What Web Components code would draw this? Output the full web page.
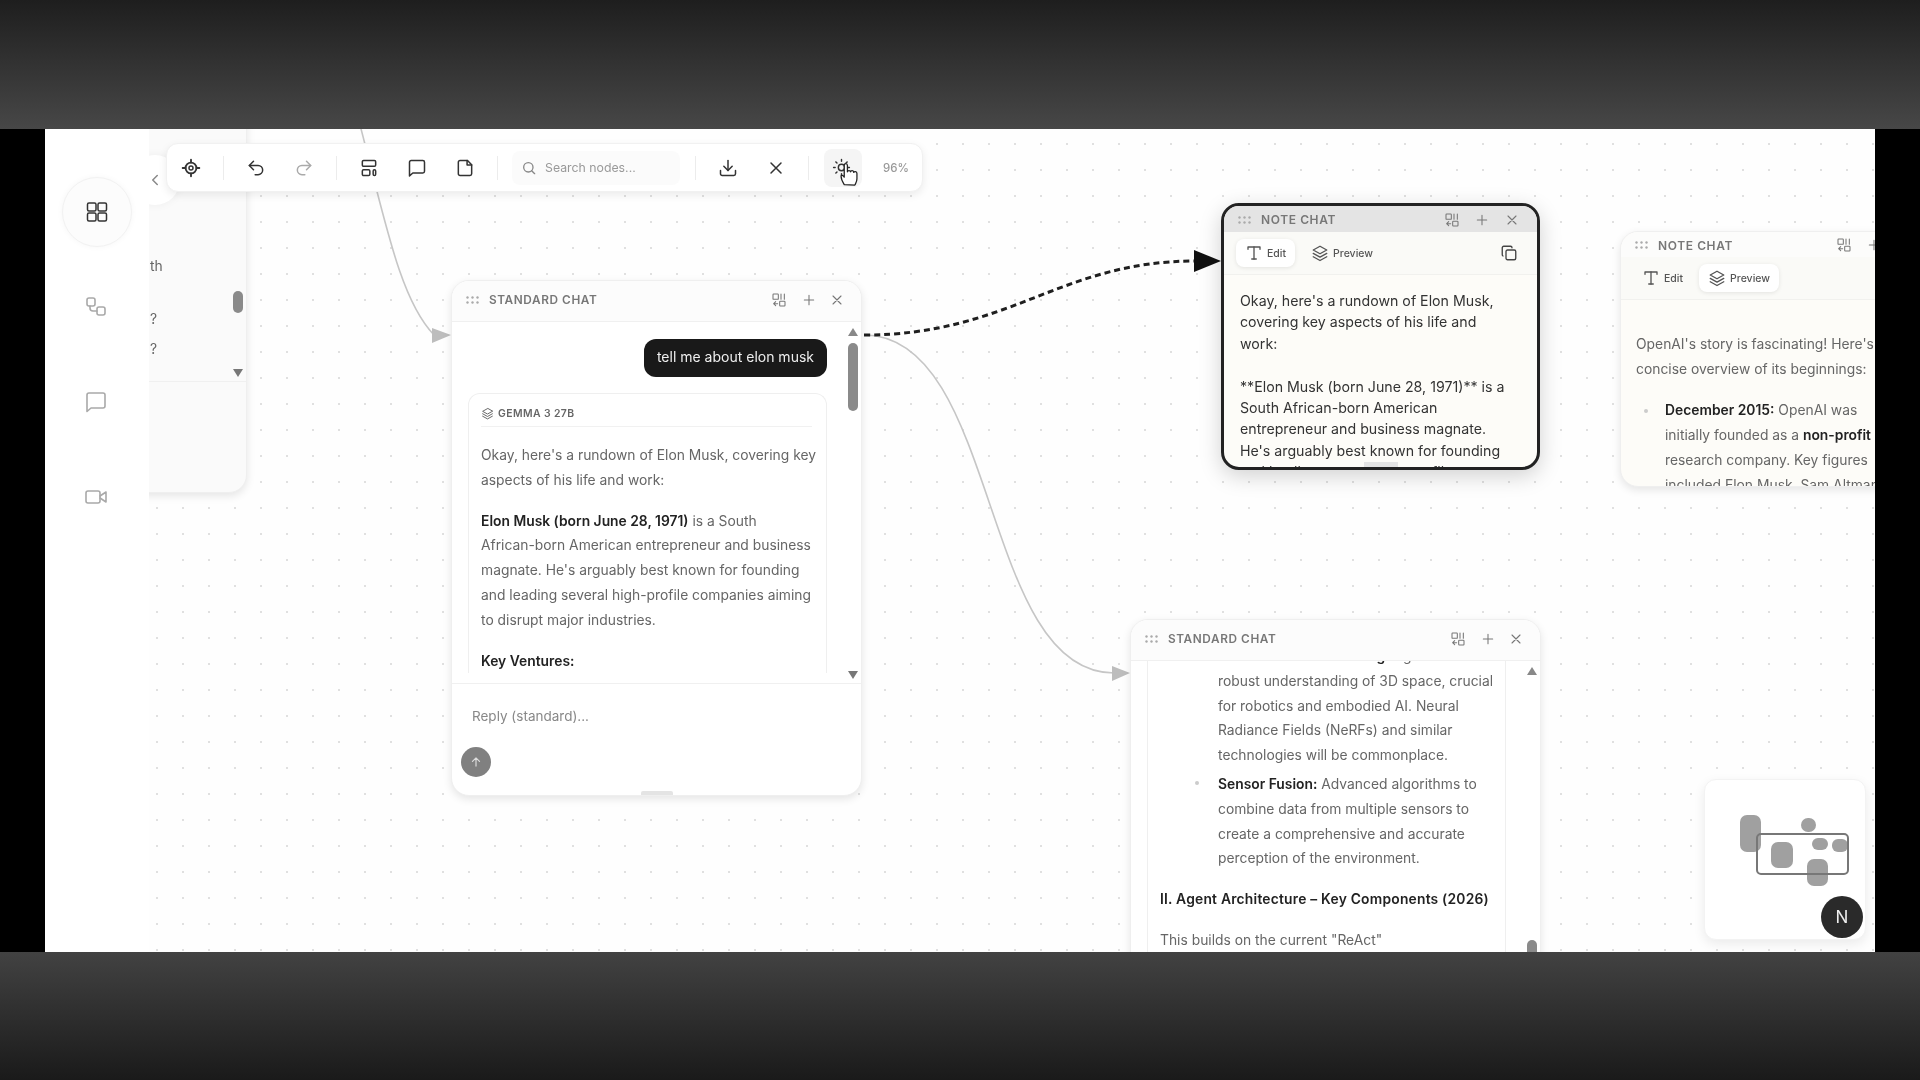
<!DOCTYPE html>
<html lang="en">
<head>
<meta charset="utf-8">
<title>Flow canvas</title>
<style>
    html, body { margin: 0; height: 100%; background: #000; }
    body { font-family: 'Inter', 'Liberation Sans', sans-serif; overflow: hidden; }
    b { font-weight: 600; color: #222; }
    .frag { font: 13.85px/25px Inter, sans-serif; color: #666; margin-left: 284px; }
</style>
</head>
<body>
<video-frame>
    <side-rail></side-rail>
    <flow-board>
        <chat-node x="-300" y="-60" w="398" h="424" foot="111" tone="#fafafa">
            <div class="frag" style="margin-top:143px;">th</div>
            <div class="frag" style="margin-top:28px;">?</div>
            <div class="frag" style="margin-top:5px;">?</div>
            <scroll-strip slot="strip" gap="166" thumb="22"></scroll-strip>
        </chat-node>

        <chat-node x="302" y="151" w="411" h="516" foot="112" title="Standard chat">
            <user-bubble>tell me about elon musk</user-bubble>
            <reply-card model="Gemma 3 27B">
                <p>Okay, here's a rundown of Elon Musk, covering key<br>aspects of his life and work:</p>
                <p><b>Elon Musk (born June 28, 1971)</b> is a South<br>African-born American entrepreneur and business<br>magnate. He's arguably best known for founding<br>and leading several high-profile companies aiming<br>to disrupt major industries.</p>
                <p><b>Key Ventures:</b></p>
            </reply-card>
            <scroll-strip slot="strip" gap="7" thumb="68"></scroll-strip>
            <reply-box slot="foot" hint="Reply (standard)..."></reply-box>
        </chat-node>

        <note-node x="1072" y="74" w="319" h="267" head="26" selected tab="edit" title="Note chat">
            <div style="font:14.2px/21.4px Inter,sans-serif;color:#333;white-space:nowrap;padding:15px 0 0 16px;">Okay, here's a rundown of Elon Musk,<br>covering key aspects of his life and<br>work:<br><br>**Elon Musk (born June 28, 1971)** is a<br>South African-born American<br>entrepreneur and business magnate.<br>He's arguably best known for founding<br>and leading several high-profile</div>
        </note-node>

        <note-node x="1471" y="102" w="310" h="256" head="25" tab="preview" title="Note chat">
            <div style="font:13.85px/25px Inter,sans-serif;color:#666;white-space:nowrap;padding:32px 0 0 15px;">
                OpenAI's story is fascinating! Here's a<br>concise overview of its beginnings:
                <div style="position:relative;margin:16px 0 0 29px;">
                    <i style="position:absolute;left:-21px;top:11px;width:4px;height:4px;border-radius:50%;background:#ccc;"></i>
                    <b>December 2015:</b> OpenAI was<br>initially founded as a <b>non-profit</b><br>research company. Key figures<br>included Elon Musk, Sam Altman,
                </div>
            </div>
        </note-node>

        <chat-node x="981" y="490" w="411" h="516" foot="0" title="Standard chat">
            <reply-card bare>
                <div style="margin:-17px 0 0 58px;position:relative;">
                    <i style="position:absolute;left:-23px;top:137px;width:4px;height:4px;border-radius:50%;background:#ccc;"></i>
                    <b>3D Scene Understanding:</b> Agents will have a<br>robust understanding of 3D space, crucial<br>for robotics and embodied AI. Neural<br>Radiance Fields (NeRFs) and similar<br>technologies will be commonplace.
                    <div style="margin-top:4px;"><b>Sensor Fusion:</b> Advanced algorithms to<br>combine data from multiple sensors to<br>create a comprehensive and accurate<br>perception of the environment.</div>
                </div>
                <p><b style="letter-spacing:.015em">II. Agent Architecture – Key Components (2026)</b></p>
                <p>This builds on the current "ReAct"</p>
            </reply-card>
            <scroll-strip slot="strip" gap="265" thumb="40"></scroll-strip>
        </chat-node>

        <tool-bar></tool-bar>
        <mini-map></mini-map>
    </flow-board>
</video-frame>

<script>
const ICONS = {
    target: '<circle cx="12" cy="12" r="6.5" stroke-width="2.2"/><circle cx="12" cy="12" r="2.4"/><path d="M12 2v3.5M12 18.5V22M2 12h3.5M18.5 12H22" stroke-width="2.2"/>',
    undo: '<path d="M9 14 4 9l5-5"/><path d="M4 9h10.5a5.5 5.5 0 0 1 0 11H11"/>',
    redo: '<path d="m15 14 5-5-5-5"/><path d="M20 9H9.5a5.5 5.5 0 0 0 0 11H13"/>',
    layout: '<rect x="4" y="3" width="16" height="7" rx="1.5"/><rect x="4" y="14" width="9" height="7" rx="1.5"/><rect x="17" y="14" width="3" height="7" rx="1.5"/>',
    comment: '<path d="M21 16a2 2 0 0 1-2 2H7l-4 3.5V5a2 2 0 0 1 2-2h14a2 2 0 0 1 2 2z"/>',
    note: '<path d="M4 5a2 2 0 0 1 2-2h9l5 5v11a2 2 0 0 1-2 2H6a2 2 0 0 1-2-2z"/><path d="M14.5 3v5.5H20"/>',
    search: '<circle cx="11" cy="11" r="7"/><path d="m20.5 20.5-4.5-4.5"/>',
    download: '<path d="M21 15v4a2 2 0 0 1-2 2H5a2 2 0 0 1-2-2v-4"/><path d="m7 10 5 5 5-5"/><path d="M12 15V3"/>',
    close: '<path d="M18 6 6 18M6 6l12 12"/>',
    plus: '<path d="M12 5v14M5 12h14"/>',
    sun: '<circle cx="12" cy="12" r="4"/><path d="M12 2v2M12 20v2M4.900 4.900l1.400 1.400M17.700 17.700l1.400 1.400M2 12h2M20 12h2M4.900 19.100l1.400-1.400M17.700 6.300l1.400-1.400"/>',
    grid: '<rect x="2.500" y="3" width="8.500" height="8" rx="1.500"/><rect x="13" y="3" width="8.500" height="8" rx="1.500"/><rect x="2.500" y="13" width="8.500" height="8" rx="1.500"/><rect x="13" y="13" width="8.500" height="8" rx="1.500"/>',
    flow: '<rect x="3" y="3" width="8" height="8" rx="2"/><rect x="13" y="12" width="8" height="8" rx="2"/><path d="M6 11v2a3 3 0 0 0 3 3h4"/>',
    video: '<rect x="2" y="6" width="14" height="12" rx="2"/><path d="m16 11 6-4v10l-6-4"/>',
    layers: '<path d="M12 3 3 8l9 5 9-5z"/><path d="m3 12.500 9 5 9-5"/><path d="m3 17 9 5 9-5"/>',
    type: '<path d="M4 7V4h16v3"/><path d="M9 20h6"/><path d="M12 4v16"/>',
    copy: '<rect x="8" y="8" width="13" height="13" rx="2"/><path d="M4 16a2 2 0 0 1-1-2V5a2 2 0 0 1 2-2h9a2 2 0 0 1 2 2"/>',
    swap: '<rect x="3" y="3" width="8" height="8" rx="1"/><path d="M15 3v8M20 3v8"/><rect x="13" y="14" width="8" height="7" rx="1"/><path d="M10 17.500H4M7 14.500l-3 3 3 3"/>',
    send: '<path d="M12 19V5M6 11l6-6 6 6"/>',
    left: '<path d="m15 18-6-6 6-6"/>',
};

class UiIcon extends HTMLElement {
    connectedCallback() {
        const size = this.getAttribute('size') ?? 20;
        const width = this.getAttribute('stroke') ?? 2;
        this.attachShadow({ mode: 'open' }).innerHTML = `
            <style>:host { display: inline-flex; flex: none; } svg { display: block; }</style>
            <svg width="${size}" height="${size}" viewBox="0 0 24 24" fill="none" stroke="currentColor"
                stroke-width="${width}" stroke-linecap="round" stroke-linejoin="round">${ICONS[this.getAttribute('name')] ?? ''}</svg>`;
    }
}

class VideoFrame extends HTMLElement {
    constructor() {
        super();
        this.attachShadow({ mode: 'open' }).innerHTML = `
            <style>
                :host { display: grid; grid-template-rows: 129px 823px 128px; width: 1920px; height: 1080px; }
                .top { background: linear-gradient(#1e1e1e, #474747); }
                .bottom { background: linear-gradient(#424242, #1a1a1a); }
                .mid { display: flex; padding: 0 45px; background: #000; }
                .screen { display: flex; flex: 1; min-width: 0; background: #fff; filter: blur(.6px); }
            </style>
            <div class="top"></div>
            <div class="mid"><div class="screen"><slot></slot></div></div>
            <div class="bottom"></div>`;
    }
}

class SideRail extends HTMLElement {
    constructor() {
        super();
        this.attachShadow({ mode: 'open' }).innerHTML = `
            <style>
                :host { display: flex; flex-direction: column; align-items: center; width: 104px; flex: none; background: #fff; color: #a9a9a9; box-sizing: border-box; padding: 48px 0 0 0; }
                .on { width: 70px; height: 70px; border-radius: 50%; background: #fcfcfc; border: 1px solid #f2f2f2; box-sizing: border-box; display: flex; align-items: center; justify-content: center; color: #333; box-shadow: 0 0 6px #0000000a; }
                .on + ui-icon { margin-top: 48px; }
                .on ~ ui-icon { height: 24px; margin-bottom: 11px; margin-right: 2px; }
                ui-icon + ui-icon { margin-top: 60px; }
            </style>
            <div class="on"><ui-icon name="grid" size="24" stroke="1.500"></ui-icon></div>
            <ui-icon name="flow" size="24" stroke="1.600"></ui-icon>
            <ui-icon name="comment" size="24" stroke="1.600"></ui-icon>
            <ui-icon name="video" size="24" stroke="1.600"></ui-icon>`;
    }
}

class FlowBoard extends HTMLElement {
    constructor() {
        super();
        this.attachShadow({ mode: 'open' }).innerHTML = `
            <style>
                :host { display: block; position: relative; flex: 1; min-width: 0; overflow: hidden; background: #fefefe radial-gradient(circle, #e0e0e0 1px, transparent 1.400px) -5px 2px / 26px 26px; }
                svg { position: absolute; inset: 0; pointer-events: none; }
                .fold { position: absolute; left: -19px; top: 26px; width: 50px; height: 50px; border-radius: 50%; background: #fff; box-shadow: 0 0 10px #0000000d; color: #888; display: flex; align-items: center; justify-content: center; }
            </style>
            <svg width="1726" height="823" viewBox="149 129 1726 823" fill="none">
                <path d="M360 125C385 220 400 300 434 335" stroke="#c6c6c6" stroke-width="1.600"/>
                <path d="M432 328 451 335 432 343z" fill="#bdbdbd"/>
                <path d="M864 335C1000 335 980 673 1114 673" stroke="#c6c6c6" stroke-width="1.600"/>
                <path d="M1112 666 1130 673 1112 681z" fill="#bdbdbd"/>
                <path d="M864 335C1010 335 1060 261 1195 261" stroke="#1f1f1f" stroke-width="3" stroke-dasharray="6 4"/>
                <path d="M1194 250 1221 261 1194 272z" fill="#111"/>
            </svg>
            <slot></slot>
            <div class="fold"><ui-icon name="left" size="18"></ui-icon></div>`;
    }
}

class ToolBar extends HTMLElement {
    constructor() {
        super();
        const btn = name => `<div class="btn"><ui-icon name="${name}" size="20" stroke="1.800"></ui-icon></div>`;
        this.attachShadow({ mode: 'open' }).innerHTML = `
            <style>
                :host { position: absolute; left: 17px; top: 14px; width: 757px; height: 49px; box-sizing: border-box; display: flex; align-items: center; background: #fff; border: 1px solid #f1f1f1; border-radius: 12px; box-shadow: 0 3px 8px #00000014; color: #333; z-index: 5; }
                .btn { width: 48px; height: 36px; display: flex; align-items: center; justify-content: center; }
                .off { color: #aaa; }
                .sep { width: 1px; height: 24px; background: #ececec; margin: 0 8px; flex: none; }
                .search { margin-left: 6px; width: 168px; height: 34px; border-radius: 8px; background: #fbfbfb; display: flex; align-items: center; gap: 8px; padding-left: 9px; box-sizing: border-box; color: #999; font: 12.300px Inter, sans-serif; }
                .search ui-icon { color: #888; }
                .sun { position: relative; margin-left: 7px; width: 38px; height: 38px; padding-right: 4px; box-sizing: border-box; border-radius: 8px; background: #f5f5f5; display: flex; align-items: center; justify-content: center; }
                .hand { position: absolute; left: 16px; top: 13px; }
                .zoom { margin-left: 21px; font: 500 11.500px Inter, sans-serif; color: #999; }
            </style>
            ${btn('target')}<div class="sep"></div>
            ${btn('undo')}<div class="btn off"><ui-icon name="redo" size="20" stroke="1.800"></ui-icon></div><div class="sep"></div>
            ${btn('layout')}${btn('comment')}${btn('note')}<div class="sep"></div>
            <div class="search"><ui-icon name="search" size="16"></ui-icon>Search nodes...</div><div class="sep" style="margin-left:15px"></div>
            ${btn('download')}${btn('close')}<div class="sep"></div>
            <div class="sun"><ui-icon name="sun" size="19" stroke="1.800"></ui-icon>
                <svg class="hand" width="18" height="25" viewBox="0 0 17 23"><path d="M4 21C2 18 1 15 1 13c0-1 2-1 3 1V3c0-2.500 3-2.500 3 0v6c0-1.500 3-1.500 3 0 0-1.500 3-1.500 3 0.500 0-1 3-1 3 1v5c0 3-1 4-2 6z" fill="#fff" stroke="#222" stroke-width="1.200" stroke-linejoin="round"/></svg>
            </div>
            <div class="zoom">96%</div>`;
    }
}

// header shared by chat and note nodes
const nodeHead = (title, h, bg, closeGap) => `
    <div class="head" style="height:${h}px;background:${bg}">
        <svg width="13" height="8" viewBox="0 0 13 8" fill="#aaa"><circle cx="1.500" cy="1.500" r="1.200"/><circle cx="6.500" cy="1.500" r="1.200"/><circle cx="11.500" cy="1.500" r="1.200"/><circle cx="1.500" cy="6.500" r="1.200"/><circle cx="6.500" cy="6.500" r="1.200"/><circle cx="11.500" cy="6.500" r="1.200"/></svg>
        <span>${title}</span>
        <ui-icon name="swap" size="16" stroke="1.600" style="margin-left:auto"></ui-icon>
        <ui-icon name="plus" size="16" stroke="1.600" style="margin-left:14px"></ui-icon>
        <ui-icon name="close" size="16" stroke="1.600" style="margin-left:${closeGap}px"></ui-icon>
    </div>`;

const HEAD_CSS = `
    .head { display: flex; align-items: center; padding: 0 16px 0 14px; flex: none; color: #777; box-sizing: border-box; }
    .head span { margin-left: 10px; font: 600 12px Inter, sans-serif; letter-spacing: .05em; text-transform: uppercase; color: #777; }`;

function placeNode(el) {
    const attr = n => el.getAttribute(n);
    el.style.cssText += `left:${attr('x')}px;top:${attr('y')}px;width:${attr('w')}px;height:${attr('h')}px;`;
}

class ChatNode extends HTMLElement {
    connectedCallback() {
        placeNode(this);
        const foot = Number(this.getAttribute('foot') ?? 0);
        const tone = this.getAttribute('tone') ?? '#fff';
        this.attachShadow({ mode: 'open' }).innerHTML = `
            <style>
                :host { position: absolute; display: flex; flex-direction: column; box-sizing: border-box; background: ${tone}; border: 1px solid #efefef; border-radius: 18px; box-shadow: 0 3px 8px #0000001a; overflow: hidden; }
                ${HEAD_CSS}
                .head { border-bottom: 1px solid #f0f0f0; padding-bottom: 2px; }
                .head span { font-size: 11.800px; }
                .body { flex: 1; min-height: 0; display: flex; overflow: hidden; }
                .col { flex: 1; min-width: 0; padding-left: 16px; font: 13.850px/24.800px Inter, sans-serif; color: #666; }
                .foot { flex: none; height: ${foot}px; box-sizing: border-box; ${foot ? 'border-top: 1px solid #f0f0f0;' : ''} position: relative; }
                .grip { position: absolute; bottom: 0; left: 50%; margin-left: -16px; width: 32px; height: 4px; border-radius: 2px 2px 0 0; background: #e4e4e4; }
            </style>
            ${nodeHead(this.getAttribute('title') ?? '', 41, '#fcfcfc', 12)}
            <div class="body"><div class="col"><slot></slot></div><slot name="strip"></slot></div>
            <div class="foot"><slot name="foot"></slot>${foot ? '<div class="grip"></div>' : ''}</div>`;
    }
}

class NoteNode extends HTMLElement {
    connectedCallback() {
        placeNode(this);
        const selected = this.hasAttribute('selected');
        const tab = this.getAttribute('tab');
        this.attachShadow({ mode: 'open' }).innerHTML = `
            <style>
                :host { position: absolute; display: flex; flex-direction: column; box-sizing: border-box; background: #fdfcf8; border: ${selected ? '3px solid #222' : '1px solid #efefef'}; border-radius: 18px; box-shadow: ${selected ? '0 6px 22px #0000002e' : '0 3px 8px #0000001a'}; overflow: hidden; }
                ${HEAD_CSS}
                .head { padding: 1px 17px 0 14px; }
                .tabs { flex: none; height: 43px; box-sizing: border-box; display: flex; align-items: center; padding: 0 19px 0 12px; gap: 7px; background: #fafaf7; border-bottom: 1px solid #f1f1ee; color: #444; }
                .tab { display: flex; align-items: center; gap: 4px; height: 28px; padding: 0 9px; border-radius: 8px; font: 500 10.500px Inter, sans-serif; color: #555; }
                .tab.on { background: #fff; box-shadow: 0 1px 4px #00000018; }
                .copy { margin-left: auto; }
                .body { flex: 1; min-height: 0; overflow: hidden; position: relative; }
                .grip { position: absolute; bottom: 0; left: 50%; margin-left: -17px; width: 34px; height: 5px; background: #e4e4e4; }
            </style>
            ${nodeHead(this.getAttribute('title') ?? '', this.getAttribute('head') ?? 25, selected ? '#e4e4e4' : '#fcfcfb', 14)}
            <div class="tabs">
                <div class="tab ${tab === 'edit' ? 'on' : ''}"><ui-icon name="type" size="18" stroke="1.800"></ui-icon>Edit</div>
                <div class="tab ${tab === 'preview' ? 'on' : ''}"><ui-icon name="layers" size="18" stroke="1.800"></ui-icon>Preview</div>
                ${selected ? '<ui-icon class="copy" name="copy" size="18" stroke="1.800"></ui-icon>' : ''}
            </div>
            <div class="body"><slot></slot>${selected ? '<div class="grip"></div>' : ''}</div>`;
    }
}

class UserBubble extends HTMLElement {
    constructor() {
        super();
        this.attachShadow({ mode: 'open' }).innerHTML = `
            <style>
                :host { display: flex; justify-content: flex-end; padding: 17px 0 16px 0; }
                div { background: #191919; color: #eee; border-radius: 12px; height: 38px; box-sizing: border-box; padding: 0 13px 3px; display: flex; align-items: center; font: 14px Inter, sans-serif; }
            </style>
            <div><slot></slot></div>`;
    }
}

class ReplyCard extends HTMLElement {
    connectedCallback() {
        const model = this.getAttribute('model');
        this.attachShadow({ mode: 'open' }).innerHTML = `
            <style>
                :host { display: block; box-sizing: border-box; padding: 11px 14px 0 12px; border: 1px solid #efefef; border-bottom: 0; border-radius: 12px 12px 0 0; white-space: nowrap; }
                :host([bare]) { border-top: 0; border-radius: 0; padding-top: 0; }
                .model { display: flex; align-items: center; gap: 4px; height: 16px; padding-bottom: 5px; border-bottom: 1px solid #f1f1f1; font: 600 10.400px Inter, sans-serif; letter-spacing: .04em; text-transform: uppercase; color: #666; margin-bottom: 16px; }
                ::slotted(p) { margin: 16px 0 0 0; }
                ::slotted(p:first-child) { margin-top: 0; }
            </style>
            ${model ? `<div class="model"><ui-icon name="layers" size="13" stroke="1.800"></ui-icon>${model}</div>` : ''}
            <slot></slot>`;
    }
}

class ScrollStrip extends HTMLElement {
    connectedCallback() {
        const gap = this.getAttribute('gap');
        const thumb = this.getAttribute('thumb');
        this.attachShadow({ mode: 'open' }).innerHTML = `
            <style>
                :host { display: flex; flex-direction: column; align-items: center; flex: none; width: 34px; padding: 6px 0 4px 18px; box-sizing: border-box; height: 100%; }
                .up { width: 0; height: 0; border: 5.500px solid transparent; border-top: 0; border-bottom: 8px solid #888; }
                .down { margin-top: auto; width: 0; height: 0; border: 5.500px solid transparent; border-bottom: 0; border-top: 8px solid #777; }
                .thumb { width: 10px; margin-top: ${gap}px; height: ${thumb}px; border-radius: 5px; background: #8a8a8a; flex: none; }
            </style>
            <div class="up"></div><div class="thumb"></div><div class="down"></div>`;
    }
}

class ReplyBox extends HTMLElement {
    connectedCallback() {
        this.attachShadow({ mode: 'open' }).innerHTML = `
            <style>
                :host { display: block; padding: 22px 0 0 20px; font: 13.500px/20px Inter, sans-serif; color: #888; }
                .send { margin: 21px 0 0 -11px; width: 30px; height: 30px; border-radius: 50%; background: #808080; color: #ddd; display: flex; align-items: center; justify-content: center; }
            </style>
            <div>${this.getAttribute('hint')}</div>
            <div class="send"><ui-icon name="send" size="14"></ui-icon></div>`;
    }
}

class MiniMap extends HTMLElement {
    constructor() {
        super();
        const blob = (x, y, w, h, r) => `<i style="left:${x}px;top:${y}px;width:${w}px;height:${h}px;border-radius:${r}px"></i>`;
        this.attachShadow({ mode: 'open' }).innerHTML = `
            <style>
                :host { position: absolute; left: 1555px; top: 650px; width: 162px; height: 161px; background: #fff; border: 1px solid #f3f3f3; border-radius: 12px; box-shadow: 0 4px 12px #00000014; box-sizing: border-box; z-index: 4; }
                i { position: absolute; background: #a0a0a0; }
                .view { position: absolute; left: 51px; top: 53px; width: 93px; height: 42px; box-sizing: border-box; border: 2px solid #777; border-radius: 5px; }
                .logo { position: absolute; left: 116px; top: 116px; width: 42px; height: 42px; border-radius: 50%; background: #2a2a2a; color: #eee; display: flex; align-items: center; justify-content: center; font: 400 17px Inter, sans-serif; }
            </style>
            ${blob(35, 35, 21, 37, 7)}${blob(96, 38, 15, 14, 7)}${blob(66, 62, 22, 26, 7)}
            ${blob(107, 58, 16, 12, 6)}${blob(127, 59, 16, 13, 6)}${blob(102, 79, 21, 27, 7)}
            <div class="view"></div>
            <div class="logo">N</div>`;
    }
}

customElements.define('ui-icon', UiIcon);
customElements.define('video-frame', VideoFrame);
customElements.define('side-rail', SideRail);
customElements.define('flow-board', FlowBoard);
customElements.define('tool-bar', ToolBar);
customElements.define('chat-node', ChatNode);
customElements.define('note-node', NoteNode);
customElements.define('user-bubble', UserBubble);
customElements.define('reply-card', ReplyCard);
customElements.define('scroll-strip', ScrollStrip);
customElements.define('reply-box', ReplyBox);
customElements.define('mini-map', MiniMap);
</script>
</body>
</html>
